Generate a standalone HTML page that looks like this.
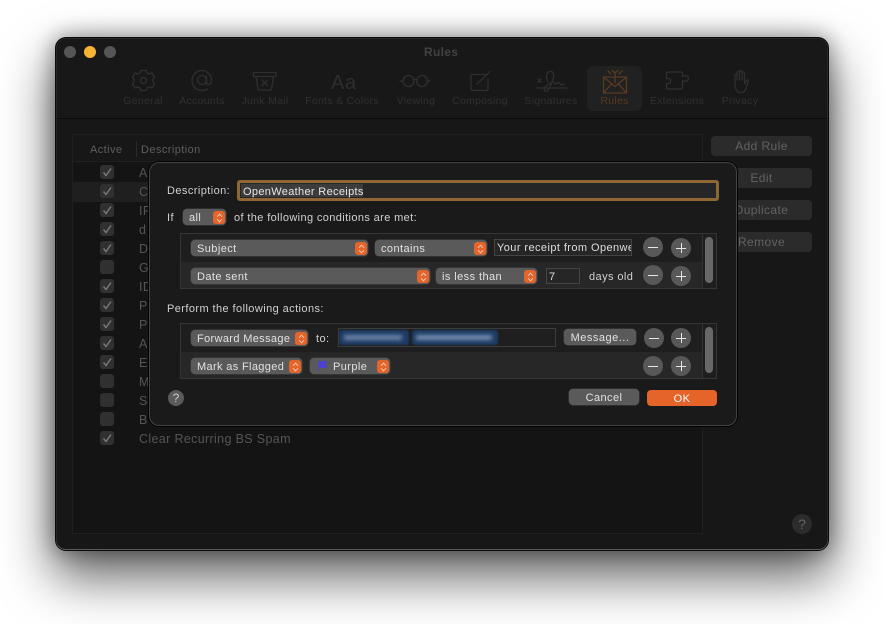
<!DOCTYPE html>
<html><head><meta charset="utf-8">
<style>
html,body{margin:0;padding:0;background:#fff;width:884px;height:624px;overflow:hidden}
*{box-sizing:border-box}
body{font-family:"Liberation Sans",sans-serif;font-size:11px}
#root{position:absolute;left:0;top:0;width:884px;height:624px;filter:blur(.35px)}
.a,.t,.p,.s,.c,.b,.cb,.tb{position:absolute}
.t{white-space:nowrap;letter-spacing:.42px;line-height:14px}
#win{position:absolute;left:56px;top:38px;width:772px;height:512px;background:#181818;border-radius:10px;box-shadow:0 0 0 1px #0a0a0a,inset 0 -1px 0 #5a5a5a,inset 0 0 0 1px #262626,0 24px 50px 4px rgba(0,0,0,.6),0 0 22px 2px rgba(0,0,0,.38)}
.tb{top:95px;color:#303030;font-size:10.5px;letter-spacing:.3px;white-space:nowrap;transform:translateX(-50%);line-height:13px}
.b{background:#2b2b2b;border-radius:4px;color:#626262;font-size:12px;letter-spacing:.4px;text-align:center;line-height:20px;left:711px;width:101px;height:20px}
.cb{left:100px;width:14px;height:14px;background:#303030;border-radius:3px}
.cb svg{position:absolute;left:0;top:0}
.row{position:absolute;left:139px;margin-top:1px;color:#555;font-size:12.5px;letter-spacing:.35px;white-space:nowrap;line-height:14px}
#dlg{position:absolute;left:149px;top:162px;width:588px;height:264px;background:#1a1a1a;border-radius:10px;box-shadow:0 0 0 1px #000,inset 0 0 0 1px #444}
.l{color:#d0d0d0}
.p{background:#5a5a5a;border-radius:4px;height:16px;color:#e2e2e2;line-height:18px;padding-left:6px;letter-spacing:.42px;white-space:nowrap;box-shadow:0 0 0 .5px #444}
.s{width:12px;height:13px;top:1.5px;right:1.5px;background:#e5642a;border-radius:3px}
.s:before,.s:after{content:"";position:absolute;left:4px;width:4px;height:4px;border-left:1px solid #f4d6c6;border-top:1px solid #f4d6c6}
.s:before{top:3px;transform:rotate(45deg) scale(.8)}
.s:after{top:6px;transform:rotate(225deg) scale(.8)}
.c{width:20px;height:20px;border-radius:50%;background:#585858}
.c:before{content:"";position:absolute;left:5px;top:9.5px;width:10px;height:1px;background:#e6e6e6}
.c.pl:after{content:"";position:absolute;left:9.5px;top:5px;width:1px;height:10px;background:#e6e6e6}
.fld{position:absolute;border:1px solid #444;background:#262626;color:#ddd;letter-spacing:.42px;white-space:nowrap;overflow:hidden;line-height:17px;padding-left:2px}
</style></head>
<body>
<div id="root">
<div id="win"></div>
<!-- traffic lights -->
<div class="a" style="left:64px;top:46px;width:12px;height:12px;border-radius:50%;background:#565656"></div>
<div class="a" style="left:84px;top:46px;width:12px;height:12px;border-radius:50%;background:#f9b233"></div>
<div class="a" style="left:104px;top:46px;width:12px;height:12px;border-radius:50%;background:#565656"></div>
<div class="t" style="left:424px;top:45px;color:#424242;font-weight:bold;font-size:12px;letter-spacing:.3px">Rules</div>
<div class="a" style="left:57px;top:118px;width:770px;height:1px;background:#0b0b0b"></div>
<div class="a" style="left:57px;top:119px;width:770px;height:430px;background:#171717;border-radius:0 0 9px 9px"></div>
<div class="a" style="left:587px;top:66px;width:55px;height:45px;background:#212121;border-radius:6px"></div>
<!-- toolbar icons -->
<svg class="a" style="left:0;top:0" width="884" height="120" fill="none" stroke="#2f2f2f" stroke-width="1.300" stroke-linecap="round" stroke-linejoin="round">
<circle cx="143.500" cy="80.500" r="3"/>
<path d="M141 70.500h5l1 2.500 2.500 1 2.500-1 2.500 4-1.500 2.500 0 2 1.500 2.500-2.500 4-2.500-1-2.500 1-1 2.500h-5l-1-2.500-2.500-1-2.500 1-2.500-4 1.500-2.500 0-2-1.500-2.500 2.500-4 2.500 1 2.500-1z"/>
<circle cx="202" cy="80" r="4.500"/>
<path d="M206.500 76v6.500c0 3 5 3 5-2.500 0-5-4.500-9.500-9.500-9.500s-10 4-10 10 4.500 10 10 10c2.500 0 4-.5 5.500-1.500"/>
<path d="M253.500 72.500h22.500v4h-22.500zM256 76.500l2 12.500q.2 1 1.500 1h10.500q1.300 0 1.500-1l2-12.500M262 80l5.500 5.500M267.500 80l-5.500 5.500"/>
<circle cx="408.500" cy="81" r="5.500"/><circle cx="422" cy="81" r="5.500"/>
<path d="M414 80q1.500-1.500 2.500 0M403 81l-3 0M427.500 81l2.500 0"/>
<path d="M486 74.500h-13.500q-1.500 0-1.500 1.500v13q0 1.500 1.500 1.500h14q1.500 0 1.500-1.500v-10M477 84l12-11.500M489.500 72l.5-.5"/>
<path d="M537 88h30M538 79l3 3M541 79l-3 3M548 82c-3-6-1-11 3-10.500 4 .5 3 6 1 10-2 4-2 8-5 9.500-3 1-4-3-1-5 3-2 7-5 8-4 1 1 0 3 2 2 2-2 3-2 4 0 1 1 2 1 4 0"/>
<path d="M603.500 77h23v16h-23zM603.500 77l11.500 9.500 11.500-9.500M603.500 93l8-9M626.500 93l-8-9M615 83V72M612 70.500l3 2.500 3-2.500M608 71l3 3M622 71l-3 3" stroke="#5a3b23"/>
<path d="M668 72h13q1.500 0 1.500 1.500v3c3-2 6-.5 6 2s-3 4-6 2v7q0 1.500-1.500 1.500h-13q-1.500 0-1.500-1.500v-4h2c3 0 3-5 0-5h-2v-5q0-1.500 1.500-1.500z"/>
<path d="M735 84V76c0-2 2-2 2 0v4-7c0-2 2.500-2 2.500 0v7-8c0-2 2.500-2 2.500 0v8-6.500c0-2 2.500-2 2.500 0V84l1.500-3c1-2 3-1 2 1l-2 6c-1 3-2 4.500-5 4.500s-6-1.500-6-8.500z"/>
<text x="331" y="89" font-family="Liberation Sans" font-size="20" fill="#2e2e2e" stroke="none" letter-spacing=".5">Aa</text>
</svg>
<div class="tb" style="left:143px">General</div>
<div class="tb" style="left:202px">Accounts</div>
<div class="tb" style="left:265px">Junk Mail</div>
<div class="tb" style="left:342px">Fonts &amp; Colors</div>
<div class="tb" style="left:416px">Viewing</div>
<div class="tb" style="left:480px">Composing</div>
<div class="tb" style="left:551px">Signatures</div>
<div class="tb" style="left:614.500px;color:#553822">Rules</div>
<div class="tb" style="left:677px">Extensions</div>
<div class="tb" style="left:740px">Privacy</div>
<!-- table -->
<div class="a" style="left:72px;top:134px;width:631px;height:400px;background:#141414;border:1px solid #202020"></div>
<div class="a" style="left:73px;top:135px;width:629px;height:27px;background:#171717;border-bottom:1px solid #1f1f1f"></div>
<div class="a" style="left:136px;top:141px;width:1px;height:16px;background:#2a2a2a"></div>
<div class="t" style="left:90px;top:143px;color:#5e5e5e;font-size:11px">Active</div>
<div class="t" style="left:141px;top:143px;color:#5e5e5e;font-size:11px">Description</div>
<div class="a" style="left:73px;top:182px;width:629px;height:20px;background:#1f1f1f"></div>
<!-- rows -->
<div class="cb" style="top:165px"><svg width="14" height="14"><path d="M3.500 7.500l2.500 3 5-7" fill="none" stroke="#777" stroke-width="1.500"/></svg></div><div class="row" style="top:165px">A</div>
<div class="cb" style="top:184px"><svg width="14" height="14"><path d="M3.500 7.500l2.500 3 5-7" fill="none" stroke="#777" stroke-width="1.500"/></svg></div><div class="row" style="top:184px">C</div>
<div class="cb" style="top:203px"><svg width="14" height="14"><path d="M3.500 7.500l2.500 3 5-7" fill="none" stroke="#777" stroke-width="1.500"/></svg></div><div class="row" style="top:203px">IP</div>
<div class="cb" style="top:222px"><svg width="14" height="14"><path d="M3.500 7.500l2.500 3 5-7" fill="none" stroke="#777" stroke-width="1.500"/></svg></div><div class="row" style="top:222px">d</div>
<div class="cb" style="top:241px"><svg width="14" height="14"><path d="M3.500 7.500l2.500 3 5-7" fill="none" stroke="#777" stroke-width="1.500"/></svg></div><div class="row" style="top:241px">D</div>
<div class="cb" style="top:260px"></div><div class="row" style="top:260px">G</div>
<div class="cb" style="top:279px"><svg width="14" height="14"><path d="M3.500 7.500l2.500 3 5-7" fill="none" stroke="#777" stroke-width="1.500"/></svg></div><div class="row" style="top:279px">ID</div>
<div class="cb" style="top:298px"><svg width="14" height="14"><path d="M3.500 7.500l2.500 3 5-7" fill="none" stroke="#777" stroke-width="1.500"/></svg></div><div class="row" style="top:298px">P</div>
<div class="cb" style="top:317px"><svg width="14" height="14"><path d="M3.500 7.500l2.500 3 5-7" fill="none" stroke="#777" stroke-width="1.500"/></svg></div><div class="row" style="top:317px">P</div>
<div class="cb" style="top:336px"><svg width="14" height="14"><path d="M3.500 7.500l2.500 3 5-7" fill="none" stroke="#777" stroke-width="1.500"/></svg></div><div class="row" style="top:336px">A</div>
<div class="cb" style="top:355px"><svg width="14" height="14"><path d="M3.500 7.500l2.500 3 5-7" fill="none" stroke="#777" stroke-width="1.500"/></svg></div><div class="row" style="top:355px">E</div>
<div class="cb" style="top:374px"></div><div class="row" style="top:374px">M</div>
<div class="cb" style="top:393px"></div><div class="row" style="top:393px">S</div>
<div class="cb" style="top:412px"></div><div class="row" style="top:412px">B</div>
<div class="cb" style="top:431px"><svg width="14" height="14"><path d="M3.500 7.500l2.500 3 5-7" fill="none" stroke="#777" stroke-width="1.500"/></svg></div><div class="row" style="top:431px">Clear Recurring BS Spam</div>
<!-- right buttons -->
<div class="b" style="top:136px">Add Rule</div>
<div class="b" style="top:168px">Edit</div>
<div class="b" style="top:200px">Duplicate</div>
<div class="b" style="top:232px">Remove</div>
<div class="a" style="left:792px;top:514px;width:20px;height:20px;border-radius:50%;background:#2c2c2c;color:#626262;font-size:14px;text-align:center;line-height:20px">?</div>
<!-- dialog -->
<div id="dlg"></div>
<div class="t l" style="left:167px;top:184px">Description:</div>
<div class="a" style="left:237px;top:180px;width:482px;height:21px;background:#262626;border:3px solid #8f6634;border-radius:3px"></div>
<div class="a" style="left:241px;top:184px;width:122px;height:13px;background:#3c3c3c"></div>
<div class="t" style="left:243px;top:185px;color:#e8e8e8;letter-spacing:.33px">OpenWeather Receipts</div>
<div class="t l" style="left:167px;top:211px">If</div>
<div class="p" style="left:183px;top:209px;width:43px">all<span class="s"></span></div>
<div class="t l" style="left:234px;top:211px;letter-spacing:.38px">of the following conditions are met:</div>
<!-- conditions -->
<div class="a" style="left:180px;top:233px;width:537px;height:56px;background:#1e1e1e;border:1px solid #353535"></div>
<div class="a" style="left:181px;top:262px;width:521px;height:26px;background:#272727"></div>
<div class="a" style="left:702px;top:234px;width:1px;height:54px;background:#333"></div>
<div class="a" style="left:705px;top:237px;width:8px;height:46px;background:#686868;border-radius:4px"></div>
<div class="p" style="left:191px;top:240px;width:177px">Subject<span class="s"></span></div>
<div class="p" style="left:375px;top:240px;width:112px">contains<span class="s"></span></div>
<div class="fld" style="left:494px;top:239px;width:138px;height:17px">Your receipt from Openweather</div>
<div class="c" style="left:643px;top:237px"></div><div class="c pl" style="left:671px;top:238px"></div>
<div class="p" style="left:191px;top:268px;width:239px">Date sent<span class="s"></span></div>
<div class="p" style="left:436px;top:268px;width:101px">is less than<span class="s"></span></div>
<div class="fld" style="left:546px;top:268px;width:34px;height:16px;line-height:16px">7</div>
<div class="t l" style="left:589px;top:270px">days old</div>
<div class="c" style="left:643px;top:265px"></div><div class="c pl" style="left:671px;top:266px"></div>
<div class="t l" style="left:167px;top:302px">Perform the following actions:</div>
<!-- actions -->
<div class="a" style="left:180px;top:323px;width:537px;height:56px;background:#1e1e1e;border:1px solid #353535"></div>
<div class="a" style="left:181px;top:352px;width:521px;height:26px;background:#272727"></div>
<div class="a" style="left:702px;top:324px;width:1px;height:54px;background:#333"></div>
<div class="a" style="left:705px;top:327px;width:8px;height:46px;background:#686868;border-radius:4px"></div>
<div class="p" style="left:191px;top:330px;width:117px;letter-spacing:.35px">Forward Message<span class="s"></span></div>
<div class="t l" style="left:316px;top:332px">to:</div>
<div class="a" style="left:338px;top:328px;width:218px;height:19px;border:1px solid #3c3c3c;background:#1f1f1f"></div>
<div class="a" style="left:339px;top:330px;width:70px;height:15px;background:#1d3a62;border-radius:3px;filter:blur(.8px)"></div>
<div class="a" style="left:412px;top:330px;width:86px;height:15px;background:#1d3a62;border-radius:3px;filter:blur(.8px)"></div>
<div class="a" style="left:344px;top:335px;width:58px;height:5px;background:#7088ad;filter:blur(2px)"></div>
<div class="a" style="left:416px;top:335px;width:76px;height:5px;background:#7a92b4;filter:blur(2px)"></div>
<div class="p" style="left:564px;top:329px;width:72px;text-align:center;padding:0;letter-spacing:.5px">Message...</div>
<div class="c" style="left:644px;top:328px"></div><div class="c pl" style="left:671px;top:328px"></div>
<div class="p" style="left:191px;top:358px;width:111px;letter-spacing:.35px">Mark as Flagged<span class="s"></span></div>
<div class="p" style="left:310px;top:358px;width:80px;padding-left:23px">Purple<span class="s"></span></div>
<svg class="a" style="left:317px;top:360px" width="12" height="12"><path d="M1 11V1h9.500l-1.500 3.500 1.500 3.500H2v3z" fill="#4a42c8"/></svg>
<div class="c" style="left:643px;top:356px"></div><div class="c pl" style="left:671px;top:356px"></div>
<div class="a" style="left:168px;top:390px;width:16px;height:16px;border-radius:50%;background:#5a5a5a;color:#ccc;font-size:12px;text-align:center;line-height:16px">?</div>
<div class="p" style="left:569px;top:389px;width:70px;text-align:center;padding:0">Cancel</div>
<div class="p" style="left:647px;top:390px;width:70px;text-align:center;padding:0;background:#e5642a;color:#fff;box-shadow:none">OK</div>
</div>
</body></html>
